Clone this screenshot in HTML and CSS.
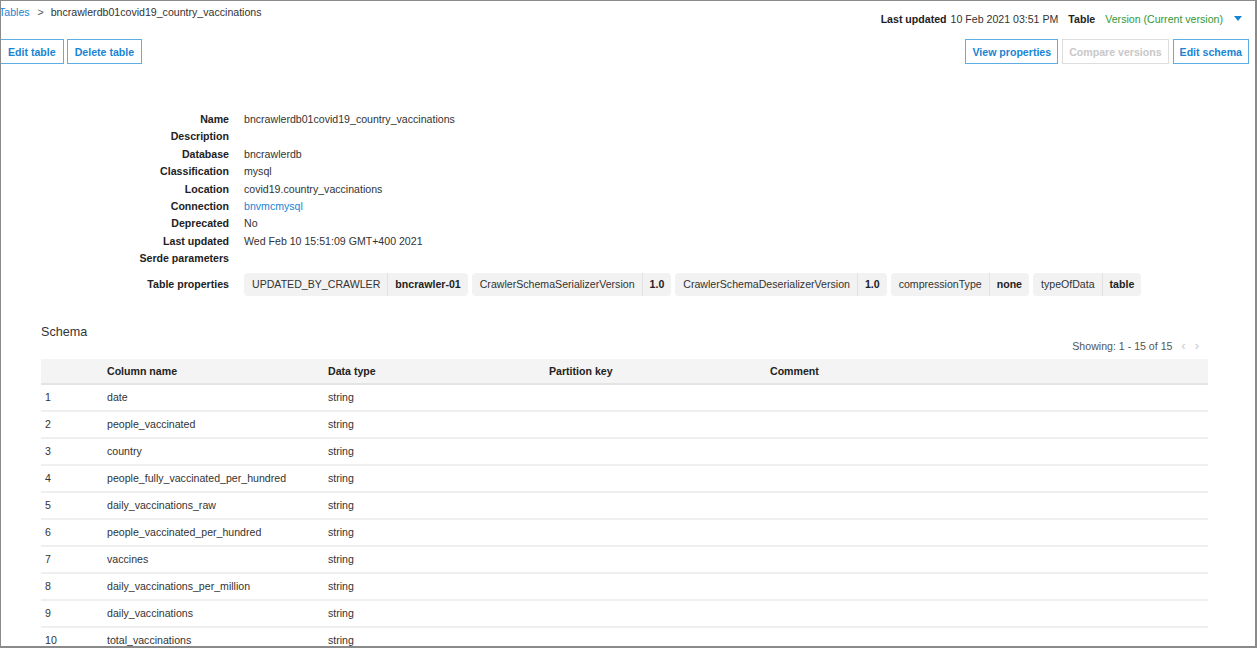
FILE: index.html
```html
<!DOCTYPE html>
<html lang="en">
<head>
  <meta charset="UTF-8" />
  <title>bncrawlerdb01covid19_country_vaccinations</title>
  <link rel="stylesheet" href="styles.css">
</head>
<body>
<div class="frame">

  <!-- Top bar: breadcrumb + version info -->
  <div class="topbar">
    <div class="crumbs">
      <a class="link" href="#">Tables</a>
      <span class="crumb-sep">&gt;</span>
      <span>bncrawlerdb01covid19_country_vaccinations</span>
    </div>
    <div class="meta">
      <b>Last updated</b> 10 Feb 2021 03:51 PM
      <b class="meta-table">Table</b>
      <span class="version">Version (Current version)</span>
      <span class="caret"></span>
    </div>
  </div>

  <!-- Action buttons -->
  <div class="actions">
    <div class="btn-group">
      <button class="btn">Edit table</button>
      <button class="btn">Delete table</button>
    </div>
    <div class="btn-group right">
      <button class="btn">View properties</button>
      <button class="btn disabled">Compare versions</button>
      <button class="btn">Edit schema</button>
    </div>
  </div>

  <!-- Table details -->
  <div class="details">
    <div class="label">Name</div><div class="value">bncrawlerdb01covid19_country_vaccinations</div>
    <div class="label">Description</div><div class="value"></div>
    <div class="label">Database</div><div class="value">bncrawlerdb</div>
    <div class="label">Classification</div><div class="value">mysql</div>
    <div class="label">Location</div><div class="value">covid19.country_vaccinations</div>
    <div class="label">Connection</div><div class="value"><a class="link" href="#">bnvmcmysql</a></div>
    <div class="label">Deprecated</div><div class="value">No</div>
    <div class="label">Last updated</div><div class="value">Wed Feb 10 15:51:09 GMT+400 2021</div>
    <div class="label">Serde parameters</div><div class="value"></div>
  </div>

  <div class="props-row">
    <div class="label">Table properties</div>
    <div class="chips">
      <div class="chip"><span class="chip-key">UPDATED_BY_CRAWLER</span><span class="chip-val">bncrawler-01</span></div>
      <div class="chip"><span class="chip-key">CrawlerSchemaSerializerVersion</span><span class="chip-val">1.0</span></div>
      <div class="chip"><span class="chip-key">CrawlerSchemaDeserializerVersion</span><span class="chip-val">1.0</span></div>
      <div class="chip"><span class="chip-key">compressionType</span><span class="chip-val">none</span></div>
      <div class="chip"><span class="chip-key">typeOfData</span><span class="chip-val">table</span></div>
    </div>
  </div>

  <!-- Schema -->
  <div class="schema">
    <h2 class="schema-title">Schema</h2>
    <div class="pager">
      Showing: 1 - 15 of 15
      <span class="pager-arrow">&lsaquo;</span>
      <span class="pager-arrow">&rsaquo;</span>
    </div>
    <table class="schema-table">
      <thead>
        <tr><th class="num"></th><th>Column name</th><th>Data type</th><th>Partition key</th><th class="comment">Comment</th></tr>
      </thead>
      <tbody>
        <tr><td class="num">1</td><td>date</td><td>string</td><td></td><td></td></tr>
        <tr><td class="num">2</td><td>people_vaccinated</td><td>string</td><td></td><td></td></tr>
        <tr><td class="num">3</td><td>country</td><td>string</td><td></td><td></td></tr>
        <tr><td class="num">4</td><td>people_fully_vaccinated_per_hundred</td><td>string</td><td></td><td></td></tr>
        <tr><td class="num">5</td><td>daily_vaccinations_raw</td><td>string</td><td></td><td></td></tr>
        <tr><td class="num">6</td><td>people_vaccinated_per_hundred</td><td>string</td><td></td><td></td></tr>
        <tr><td class="num">7</td><td>vaccines</td><td>string</td><td></td><td></td></tr>
        <tr><td class="num">8</td><td>daily_vaccinations_per_million</td><td>string</td><td></td><td></td></tr>
        <tr><td class="num">9</td><td>daily_vaccinations</td><td>string</td><td></td><td></td></tr>
        <tr><td class="num">10</td><td>total_vaccinations</td><td>string</td><td></td><td></td></tr>
        <tr><td class="num">11</td><td>people_fully_vaccinated</td><td>string</td><td></td><td></td></tr>
      </tbody>
    </table>
  </div>

</div>
</body>
</html>
```

FILE: styles.css
```css
* {
  box-sizing: border-box;
}

body {
  margin: 0;
  background: #fff;
  font-family: "Liberation Sans", Arial, sans-serif;
  font-size: 10.6px;
  color: #333;
}

/* Outer gray frame around the whole screenshot */
.frame {
  width: 1257px;
  height: 648px;
  border: 1px solid #8a8a8a;
  border-right-width: 2px;
  border-bottom-width: 2px;
  overflow: hidden;
}

.link {
  color: #1a84d4;
  text-decoration: none;
}

/* Top bar */
.topbar {
  display: flex;
  justify-content: space-between;
  align-items: center;
  height: 26px;
  padding-right: 13px;
}

.crumbs {
  margin-left: -2px;
  margin-top: -4px;
}

.crumb-sep {
  margin: 0 4px 0 5px;
  color: #555;
}

.meta {
  color: #333;
  display: flex;
  align-items: center;
  gap: 4px;
  margin-top: 9px;
}

.meta b {
  color: #222;
}

.meta-table {
  margin-left: 6px;
}

.version {
  color: #2d9a3a;
  margin-left: 6px;
}

.caret {
  width: 0;
  height: 0;
  border-left: 4px solid transparent;
  border-right: 4px solid transparent;
  border-top: 5px solid #1a84d4;
  margin-left: 7px;
}

/* Buttons */
.actions {
  display: flex;
  justify-content: space-between;
  margin-top: 12px;
  margin-left: -1px;
  padding-right: 6px;
}

.btn-group {
  display: flex;
  gap: 3px;
}

.btn-group.right {
  gap: 4px;
}

.btn {
  height: 25px;
  padding: 0 7px;
  background: #fff;
  border: 1px solid #5eaee6;
  color: #1a84d4;
  font-family: inherit;
  font-size: 10.6px;
  font-weight: bold;
  cursor: pointer;
}

.btn-group.right .btn {
  padding: 0 6px;
}

.btn.disabled {
  border-color: #ddd;
  color: #c8c8c8;
  cursor: default;
}

/* Details */
.details {
  display: grid;
  grid-template-columns: 228px 1fr;
  column-gap: 15px;
  margin-top: 47px;
  line-height: 17.4px;
}

.label {
  text-align: right;
  font-weight: bold;
  color: #222;
}

.value {
  min-height: 17.4px;
}

.props-row {
  display: grid;
  grid-template-columns: 228px 1fr;
  column-gap: 15px;
  align-items: center;
  margin-top: 5px;
}

.chips {
  display: flex;
  gap: 4px;
}

.chip {
  display: flex;
  background: #f2f2f2;
  border-radius: 4px;
  height: 23px;
  line-height: 23px;
}

.chip-key {
  padding: 0 7px 0 8px;
  color: #333;
  border-right: 1px solid #e2e2e2;
}

.chip-val {
  padding: 0 7px;
  font-weight: bold;
  color: #222;
}

/* Schema */
.schema {
  margin: 29px 0 0 40px;
  width: 1167px;
}

.schema-title {
  margin: 0;
  font-size: 12.6px;
  font-weight: normal;
  color: #333;
}

.pager {
  text-align: right;
  color: #555;
  margin-top: -1px;
  padding-right: 9px;
}

.pager-arrow {
  color: #c8c8c8;
  font-size: 13px;
  margin-left: 6px;
}

.schema-table {
  width: 100%;
  border-collapse: collapse;
  margin-top: 6px;
}

.schema-table th {
  text-align: left;
  font-weight: bold;
  color: #222;
  background: #f4f4f4;
  height: 25px;
  padding: 0 4px;
  border-bottom: 2px solid #e4e4e4;
  width: 221px;
}

.schema-table td {
  height: 27px;
  padding: 0 4px;
  border-bottom: 2px solid #efefef;
  color: #333;
}

.schema-table .num {
  width: 62px;
}

.schema-table .comment {
  width: auto;
}
```
